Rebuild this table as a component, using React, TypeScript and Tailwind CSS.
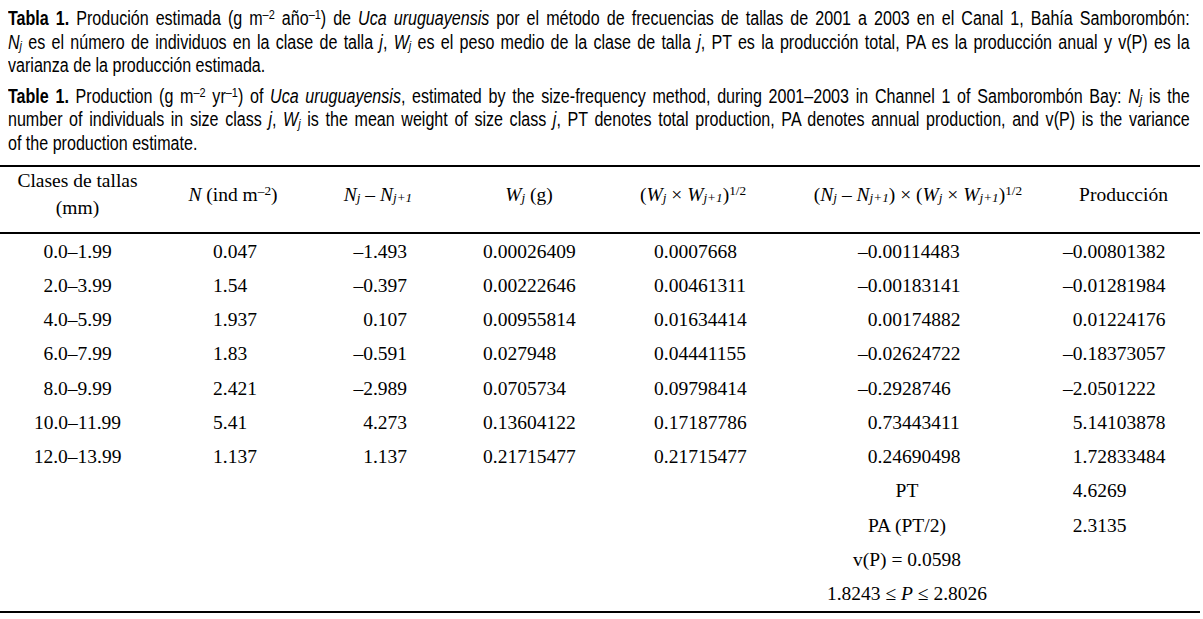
import type { ReactNode } from "react";

type Row = [string, string, string, string, string, string, string];

const rows: Row[] = [
  ["0.0–1.99", "0.047", "–1.493", "0.00026409", "0.0007668", "–0.00114483", "–0.00801382"],
  ["2.0–3.99", "1.54", "–0.397", "0.00222646", "0.00461311", "–0.00183141", "–0.01281984"],
  ["4.0–5.99", "1.937", "0.107", "0.00955814", "0.01634414", "0.00174882", "0.01224176"],
  ["6.0–7.99", "1.83", "–0.591", "0.027948", "0.04441155", "–0.02624722", "–0.18373057"],
  ["8.0–9.99", "2.421", "–2.989", "0.0705734", "0.09798414", "–0.2928746", "–2.0501222"],
  ["10.0–11.99", "5.41", "4.273", "0.13604122", "0.17187786", "0.73443411", "5.14103878"],
  ["12.0–13.99", "1.137", "1.137", "0.21715477", "0.21715477", "0.24690498", "1.72833484"],
];

const cols = "grid grid-cols-[155px_156px_134px_168px_160px_290px_1fr]";

function Sub({ children }: { children: ReactNode }) {
  return <sub className="relative top-[0.15em] align-baseline text-[0.68em]">{children}</sub>;
}

function Sup({ children }: { children: ReactNode }) {
  return <sup className="relative -top-[0.45em] align-baseline text-[0.68em]">{children}</sup>;
}

// sign slot keeps digits aligned; minus hangs to the left
function Signed({ v }: { v: string }) {
  const neg = v.startsWith("–");
  return (
    <span>
      <span className={neg ? "" : "invisible"}>–</span>
      {neg ? v.slice(1) : v}
    </span>
  );
}

function Line({ children, last }: { children: ReactNode; last?: boolean }) {
  return (
    <div
      className={
        last
          ? "whitespace-nowrap"
          : "whitespace-nowrap text-justify [text-align-last:justify]"
      }
    >
      {children}
    </div>
  );
}

// no narrow face installed, so the caption is squeezed to Arial Narrow proportions
function Caption() {
  return (
    <div className="pl-[8px] pt-[7px] pb-[10px]">
      <div className="w-[1434px] origin-left scale-x-[0.824] text-[19.5px] leading-[23.5px] text-black font-['Liberation_Sans',Arial,sans-serif]">
        <Line>
          <b>Tabla 1.</b> Produción estimada (g m<Sup>–2</Sup> año<Sup>–1</Sup>) de <i>Uca uruguayensis</i> por el método de frecuencias de tallas de 2001 a 2003 en el Canal 1, Bahía Samborombón:
        </Line>
        <Line>
          <i>N<Sub>j</Sub></i> es el número de individuos en la clase de talla <i>j</i>, <i>W<Sub>j</Sub></i> es el peso medio de la clase de talla <i>j</i>, PT es la producción total, PA es la producción anual y v(P) es la
        </Line>
        <Line last>varianza de la producción estimada.</Line>
        <div className="mt-[7px]">
          <Line>
            <b>Table 1.</b> Production (g m<Sup>–2</Sup> yr<Sup>–1</Sup>) of <i>Uca uruguayensis</i>, estimated by the size-frequency method, during 2001–2003 in Channel 1 of Samborombón Bay: <i>N<Sub>j</Sub></i> is the
          </Line>
          <Line>
            number of individuals in size class <i>j</i>, <i>W<Sub>j</Sub></i> is the mean weight of size class <i>j</i>, PT denotes total production, PA denotes annual production, and v(P) is the variance
          </Line>
          <Line last>of the production estimate.</Line>
        </div>
      </div>
    </div>
  );
}

function HeaderRow() {
  return (
    <div className={`${cols} h-[67px] border-b-2 border-black items-center pb-[14px] text-center leading-[27px]`}>
      <div>
        Clases de tallas
        <br />
        (mm)
      </div>
      <div>
        <i>N</i> (ind m<Sup>–2</Sup>)
      </div>
      <div>
        <i>N<Sub>j</Sub></i> – <i>N<Sub>j+1</Sub></i>
      </div>
      <div>
        <i>W<Sub>j</Sub></i> (g)
      </div>
      <div>
        (<i>W<Sub>j</Sub></i> × <i>W<Sub>j+1</Sub></i>)<Sup>1/2</Sup>
      </div>
      <div>
        (<i>N<Sub>j</Sub></i> – <i>N<Sub>j+1</Sub></i>) × (<i>W<Sub>j</Sub></i> × <i>W<Sub>j+1</Sub></i>)<Sup>1/2</Sup>
      </div>
      <div className="pr-[16px]">Producción</div>
    </div>
  );
}

function DataRow({ r }: { r: Row }) {
  return (
    <div className={`${cols} h-[34.27px] items-center whitespace-nowrap`}>
      <div className="text-center">{r[0]}</div>
      <div className="pl-[58px]">{r[1]}</div>
      <div className="pr-[38px] text-right">{r[2]}</div>
      <div className="pl-[38px]">{r[3]}</div>
      <div className="pl-[41px]">{r[4]}</div>
      <div className="pl-[85px]">
        <Signed v={r[5]} />
      </div>
      <div>
        <Signed v={r[6]} />
      </div>
    </div>
  );
}

function SummaryRow({ label, value }: { label: ReactNode; value?: string }) {
  return (
    <div className={`${cols} h-[34.27px] items-center whitespace-nowrap`}>
      <div className="col-start-6 pr-[22px] text-center">{label}</div>
      <div>{value ? <Signed v={value} /> : null}</div>
    </div>
  );
}

export default function App() {
  return (
    <div className="h-[619px] w-[1203px] overflow-hidden bg-white text-black">
      <Caption />
      <div className="w-[1200px] border-y-2 border-black text-[19.5px] font-['Liberation_Serif','Times_New_Roman',serif]">
        <HeaderRow />
        {rows.map((r) => (
          <DataRow key={r[0]} r={r} />
        ))}
        <SummaryRow label="PT" value="4.6269" />
        <SummaryRow label="PA (PT/2)" value="2.3135" />
        <SummaryRow label="v(P) = 0.0598" />
        <SummaryRow
          label={
            <>
              1.8243 ≤ <i>P</i> ≤ 2.8026
            </>
          }
        />
      </div>
    </div>
  );
}
